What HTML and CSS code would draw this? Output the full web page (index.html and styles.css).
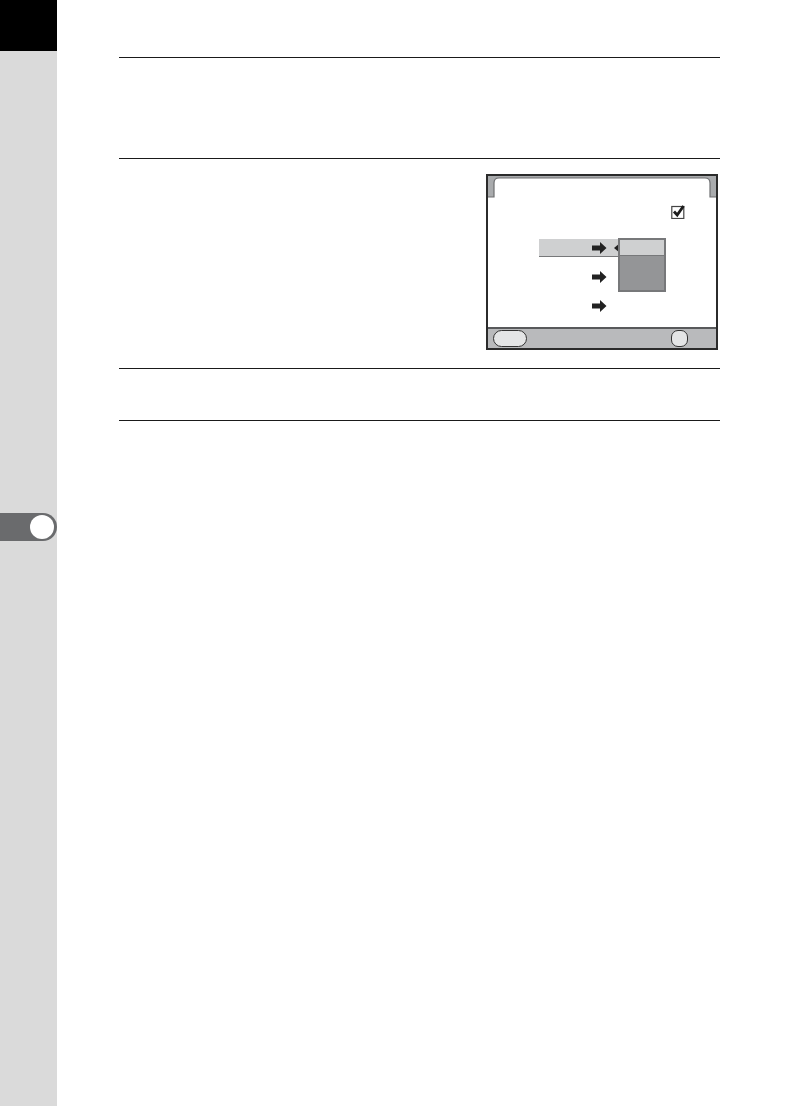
FILE: index.html
```html
<!DOCTYPE html>
<html lang="en">
<head>
<meta charset="utf-8">
<title>Manual page</title>
<link rel="stylesheet" href="styles.css">
</head>
<body>
<div class="page">
  <aside class="side">
    <div class="side-top"></div>
    <div class="side-tab"><span class="side-dot"></span></div>
  </aside>
  <main class="main">
    <section class="sec sec-a"></section>
    <section class="sec sec-b">
      <div class="screen">
        <svg class="head" width="228" height="22" viewBox="0 0 228 22">
          <path class="head-fill" d="M0 0H228V21H222V7Q222 2 217 2H11Q6 2 6 7V21H0Z"/>
          <path class="head-line" d="M0 21H6V7Q6 2 11 2H217Q222 2 222 7V21H228"/>
        </svg>
        <div class="check-row">
          <svg class="check" width="15" height="14" viewBox="0 0 15 14">
            <rect class="check-box" x="0.8" y="1.5" width="12" height="12"/>
            <path class="check-tick" d="M3 6.5L6.2 10L12.5 1"/>
          </svg>
        </div>
        <div class="rows">
          <div class="row row-on">
            <svg class="arrow" width="15" height="12" viewBox="0 0 15 12"><path d="M0 3.5H8V0L14.5 6L8 12V8.5H0Z"/></svg>
            <span class="caret"></span>
          </div>
          <div class="row">
            <svg class="arrow" width="15" height="12" viewBox="0 0 15 12"><path d="M0 3.5H8V0L14.5 6L8 12V8.5H0Z"/></svg>
          </div>
          <div class="row">
            <svg class="arrow" width="15" height="12" viewBox="0 0 15 12"><path d="M0 3.5H8V0L14.5 6L8 12V8.5H0Z"/></svg>
          </div>
        </div>
        <div class="popup">
          <div class="popup-on"></div>
        </div>
        <div class="foot">
          <span class="key key-wide"></span>
          <span class="key key-round"></span>
        </div>
      </div>
    </section>
    <section class="sec sec-c"></section>
  </main>
</div>
</body>
</html>
```
FILE: styles.css
```css
html, body {
  margin: 0;
  padding: 0;
  background: #fff;
}
.page {
  display: flex;
  width: 794px;
  height: 1106px;
  overflow: hidden;
}
.side {
  width: 57px;
  flex: none;
  background: #dadada;
}
.side-top {
  height: 51px;
  background: #000;
}
.side-tab {
  margin-top: 462px;
  height: 28px;
  box-sizing: border-box;
  background: #6a6b6d;
  border-radius: 0 14px 14px 0;
  display: flex;
  align-items: center;
  justify-content: flex-end;
  padding-right: 3px;
}
.side-dot {
  width: 24px;
  height: 24px;
  border-radius: 50%;
  background: #fff;
}
.main {
  margin: 57px 0 0 62px;
  width: 601px;
}
.sec {
  box-sizing: border-box;
  border-top: 1px solid #1a1a1a;
}
.sec-a { height: 101px; }
.sec-b {
  height: 210px;
  padding: 15px 2px 0 367px;
}
.sec-c {
  height: 53px;
  border-bottom: 1px solid #1a1a1a;
}
.screen {
  position: relative;
  box-sizing: border-box;
  width: 232px;
  height: 176px;
  border: 2px solid #2b2b2b;
  background: #fff;
  display: flex;
  flex-direction: column;
}
.head { display: block; flex: none; }
.head-fill { fill: #a9abad; }
.head-line { fill: none; stroke: #6e6f71; stroke-width: 1.2; }
.check-row {
  display: flex;
  justify-content: flex-end;
  height: 41px;
  padding: 7px 30px 0 0;
  box-sizing: border-box;
}
.check { display: block; }
.check-box { fill: #fff; stroke: #444; stroke-width: 1.2; }
.check-tick { fill: none; stroke: #1c1c1c; stroke-width: 2.8; }
.rows {
  height: 88px;
  display: flex;
  flex-direction: column;
  gap: 11px;
}
.row {
  box-sizing: border-box;
  width: 81px;
  height: 18px;
  margin-left: 51px;
  padding-left: 53px;
  display: flex;
  align-items: center;
}
.row-on {
  background: #cfd0d1;
  border-bottom: 1px solid #77787a;
}
.arrow { display: block; flex: none; }
.arrow path { fill: #222; }
.caret {
  margin-left: 7px;
  flex: none;
  width: 0;
  height: 0;
  border-style: solid;
  border-width: 5px 6px 5px 0;
  border-color: transparent #222 transparent transparent;
}
.popup {
  position: absolute;
  left: 130px;
  top: 62px;
  box-sizing: border-box;
  width: 48px;
  height: 54px;
  border: 2px solid #77787a;
  background: #949597;
}
.popup-on {
  height: 15px;
  background: #cfd0d1;
  border-bottom: 1px solid #77787a;
}
.foot {
  flex: 1;
  box-sizing: border-box;
  background: #b9babc;
  border-top: 2px solid #58595b;
  display: flex;
  align-items: center;
  justify-content: space-between;
  padding: 0 28px 0 5px;
}
.key {
  box-sizing: border-box;
  height: 17px;
  background: #e4e5e6;
  border: 1.5px solid #333;
}
.key-wide { width: 34px; border-radius: 9px; }
.key-round { width: 17px; border-radius: 7px; }
```
